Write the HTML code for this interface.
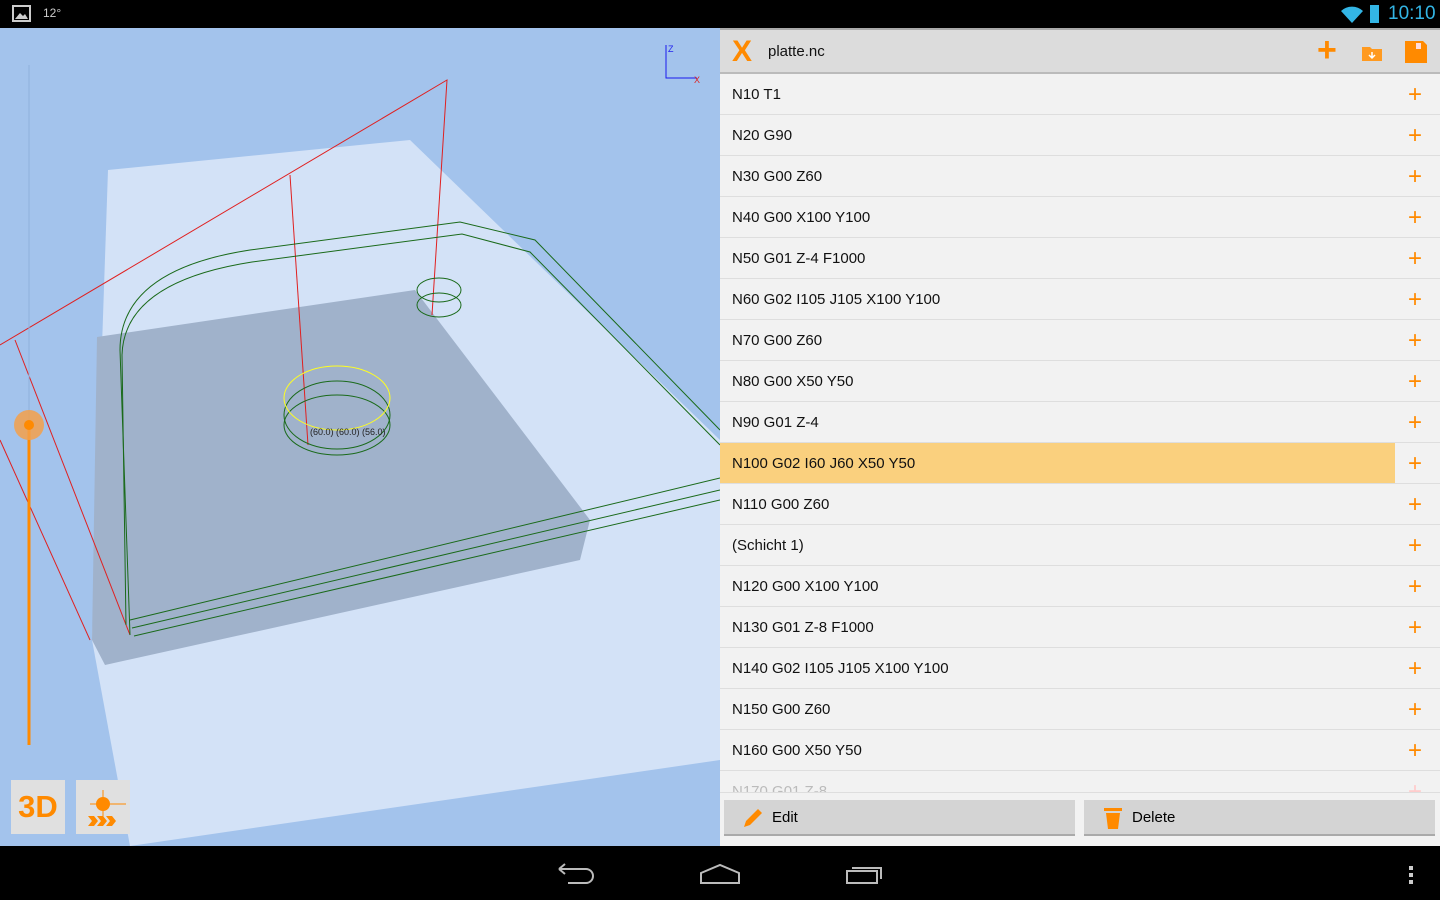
<!DOCTYPE html>
<html><head><meta charset="utf-8"><style>
body{margin:0;width:1440px;height:900px;overflow:hidden;background:#000;font-family:"Liberation Sans",sans-serif;position:relative}
#sb{position:absolute;top:0;left:0;width:1440px;height:28px;background:#000;color:#fff}
#view{position:absolute;top:28px;left:0;width:720px;height:818px;background:#a3c3ec;overflow:hidden}
#panel{position:absolute;top:28px;left:720px;width:720px;height:818px;background:#f2f2f2}
#hdr{height:46px;background:#dcdcdc;border-top:2px solid #aaa;border-bottom:2px solid #bbb;box-sizing:border-box;position:relative}
.row{height:41px;border-bottom:1px solid #dedede;box-sizing:border-box;position:relative;font-size:15px;color:#111;line-height:41px;padding-left:12px}
.row .p{position:absolute;right:18px;top:0;color:#ff8a00;font-size:24px;font-weight:300}
#nav{position:absolute;top:846px;left:0;width:1440px;height:54px;background:#000}
.btn{position:absolute;top:772px;height:36px;background:#d4d4d4;border-bottom:2px solid #aaa;box-sizing:border-box;font-size:15px;line-height:36px}
</style></head><body>
<div id="sb">
<svg width="20" height="18" style="position:absolute;left:12px;top:5px"><rect x="1" y="1" width="17" height="15" fill="none" stroke="#ccc" stroke-width="2"/><path d="M3 14 L8 8 L11 11 L13 9 L16 14Z" fill="#ccc"/></svg>
<span style="position:absolute;left:43px;top:6px;font-size:12px;color:#ccc">12°</span>
<svg width="24" height="18" style="position:absolute;left:1340px;top:5px"><path d="M1 6 A16 16 0 0 1 23 6 L12 18Z" fill="#33b5e5"/></svg>
<div style="position:absolute;left:1370px;top:5px;width:9px;height:18px;background:#33b5e5"></div>
<span style="position:absolute;left:1388px;top:3px;font-size:19px;color:#33b5e5">10:10</span>
</div>
<div id="view">
<svg width="720" height="818" viewBox="0 28 720 818">
<polygon points="108,170 410,140 720,440 720,760 130,846 92,640" fill="#d3e2f7"/>
<polygon points="97,337 415,290 590,520 580,560 105,665 92,640" fill="#a0b2cb"/>
<polyline points="0,345 447,80 432,315" fill="none" stroke="#e02020" stroke-width="1"/>
<line x1="290" y1="175" x2="308" y2="445" stroke="#e02020"/>
<polyline points="15,340 130,635" fill="none" stroke="#e02020"/>
<polyline points="0,440 90,640" fill="none" stroke="#e02020"/>
<g fill="none" stroke="#1a6a1a" stroke-width="1">
<path d="M130,635 L120,350 Q120,270 250,250 L460,222 L535,240 L720,430"/>
<path d="M126,625 L122,355 Q124,282 252,262 L462,234 L530,252 L720,445"/>
<path d="M130,620 L720,478 M132,628 L720,490 M134,636 L720,500"/>
<ellipse cx="337" cy="415" rx="53" ry="34"/><ellipse cx="337" cy="425" rx="53" ry="30"/>
<ellipse cx="439" cy="290" rx="22" ry="12"/><ellipse cx="439" cy="305" rx="22" ry="12"/>
</g>
<ellipse cx="337" cy="398" rx="53" ry="32" fill="none" stroke="#ffff20"/>
<text x="310" y="435" font-size="9" fill="#222" font-family="Liberation Sans">(60.0) (60.0) (56.0)</text>
<line x1="29" y1="65" x2="29" y2="745" stroke="#8fb0dc"/>
<line x1="29" y1="425" x2="29" y2="745" stroke="#ff8a00" stroke-width="3"/>
<circle cx="29" cy="425" r="15" fill="#f5a04a" opacity="0.85"/><circle cx="29" cy="425" r="5" fill="#ff8a00"/>
<path d="M666,45 V78 H697" stroke="#1a1aee" fill="none"/>
<text x="668" y="52" font-size="9" fill="#2222ee">Z</text><text x="694" y="83" font-size="9" fill="#dd2222">X</text>
</svg>
<div style="position:absolute;left:11px;top:752px;width:54px;height:54px;background:#e0e0e0;color:#ff8a00;font-weight:bold;font-size:31px;text-align:center;line-height:54px">3D</div>
<div style="position:absolute;left:76px;top:752px;width:54px;height:54px;background:#e0e0e0">
<svg width="54" height="54"><line x1="27" y1="10" x2="27" y2="40" stroke="#ff8a00"/><line x1="14" y1="24" x2="50" y2="24" stroke="#ff8a00"/><circle cx="27" cy="24" r="7" fill="#ff8a00"/><path d="M12,36 l6,0 l4,5 l-4,5 l-6,0 l4,-5z M21,36 l6,0 l4,5 l-4,5 l-6,0 l4,-5z M30,36 l6,0 l4,5 l-4,5 l-6,0 l4,-5z" fill="#ff8a00"/></svg></div>
</div>
<div id="panel">
<div id="hdr">
<span style="position:absolute;left:12px;top:5px;color:#ff8a00;font-size:30px;font-weight:bold">X</span>
<span style="position:absolute;left:48px;top:13px;font-size:15px;color:#111">platte.nc</span>
<span style="position:absolute;left:597px;top:1px;color:#ff8a00;font-size:34px;font-weight:bold">+</span>
<svg width="24" height="20" style="position:absolute;left:641px;top:13px"><path d="M1 4 H9 L11 6 H21 V18 H1Z" fill="#ff9a20"/><path d="M11 9 V15 M8 12 L11 15 L14 12" stroke="#fff" fill="none" stroke-width="1.5"/></svg>
<svg width="22" height="22" style="position:absolute;left:685px;top:11px"><path d="M0 0 H18 L22 4 V22 H0Z" fill="#ff8a00"/><rect x="11" y="2" width="5" height="6" fill="#fdd"/></svg>
</div>
<div class="row">N10 T1<span class="p">+</span></div>
<div class="row">N20 G90<span class="p">+</span></div>
<div class="row">N30 G00 Z60<span class="p">+</span></div>
<div class="row">N40 G00 X100 Y100<span class="p">+</span></div>
<div class="row">N50 G01 Z-4 F1000<span class="p">+</span></div>
<div class="row">N60 G02 I105 J105 X100 Y100<span class="p">+</span></div>
<div class="row">N70 G00 Z60<span class="p">+</span></div>
<div class="row">N80 G00 X50 Y50<span class="p">+</span></div>
<div class="row">N90 G01 Z-4<span class="p">+</span></div>
<div class="row" style="background:linear-gradient(to right,#fad07e 675px,#f2f2f2 675px)">N100 G02 I60 J60 X50 Y50<span class="p">+</span></div>
<div class="row">N110 G00 Z60<span class="p">+</span></div>
<div class="row">(Schicht 1)<span class="p">+</span></div>
<div class="row">N120 G00 X100 Y100<span class="p">+</span></div>
<div class="row">N130 G01 Z-8 F1000<span class="p">+</span></div>
<div class="row">N140 G02 I105 J105 X100 Y100<span class="p">+</span></div>
<div class="row">N150 G00 Z60<span class="p">+</span></div>
<div class="row">N160 G00 X50 Y50<span class="p">+</span></div>
<div class="row" style="height:22px;overflow:hidden;color:#bbb;line-height:41px">N170 G01 Z-8<span class="p" style="color:#fcc">+</span></div>
<div class="btn" style="left:4px;width:351px"><svg width="22" height="22" style="position:absolute;left:18px;top:7px"><path d="M2 20 L4 14 L16 2 L20 6 L8 18Z" fill="#ff8a00"/></svg><span style="position:absolute;left:48px">Edit</span></div>
<div class="btn" style="left:364px;width:351px"><svg width="18" height="22" style="position:absolute;left:20px;top:7px"><rect x="0" y="1" width="18" height="3" fill="#ff8a00"/><path d="M2 6 H16 L14 22 H4Z" fill="#ff8a00"/></svg><span style="position:absolute;left:48px">Delete</span></div>
</div>
<div id="nav">
<svg width="40" height="24" style="position:absolute;left:556px;top:17px"><path d="M3 6 H30 A7 7 0 0 1 30 20 H12 M3 6 L9 1 M3 6 L9 11" fill="none" stroke="#bbb" stroke-width="2"/></svg>
<svg width="42" height="22" style="position:absolute;left:699px;top:17px"><path d="M2 20 V10 L21 2 L40 10 V20Z" fill="none" stroke="#bbb" stroke-width="2"/></svg>
<svg width="40" height="22" style="position:absolute;left:845px;top:17px"><rect x="2" y="8" width="30" height="12" fill="none" stroke="#bbb" stroke-width="2"/><path d="M7 5 H36 V16" fill="none" stroke="#bbb" stroke-width="2"/></svg>
<div style="position:absolute;left:1409px;top:20px;width:4px;height:4px;background:#ccc;box-shadow:0 7px #ccc,0 14px #ccc"></div>
</div>
</body></html>
